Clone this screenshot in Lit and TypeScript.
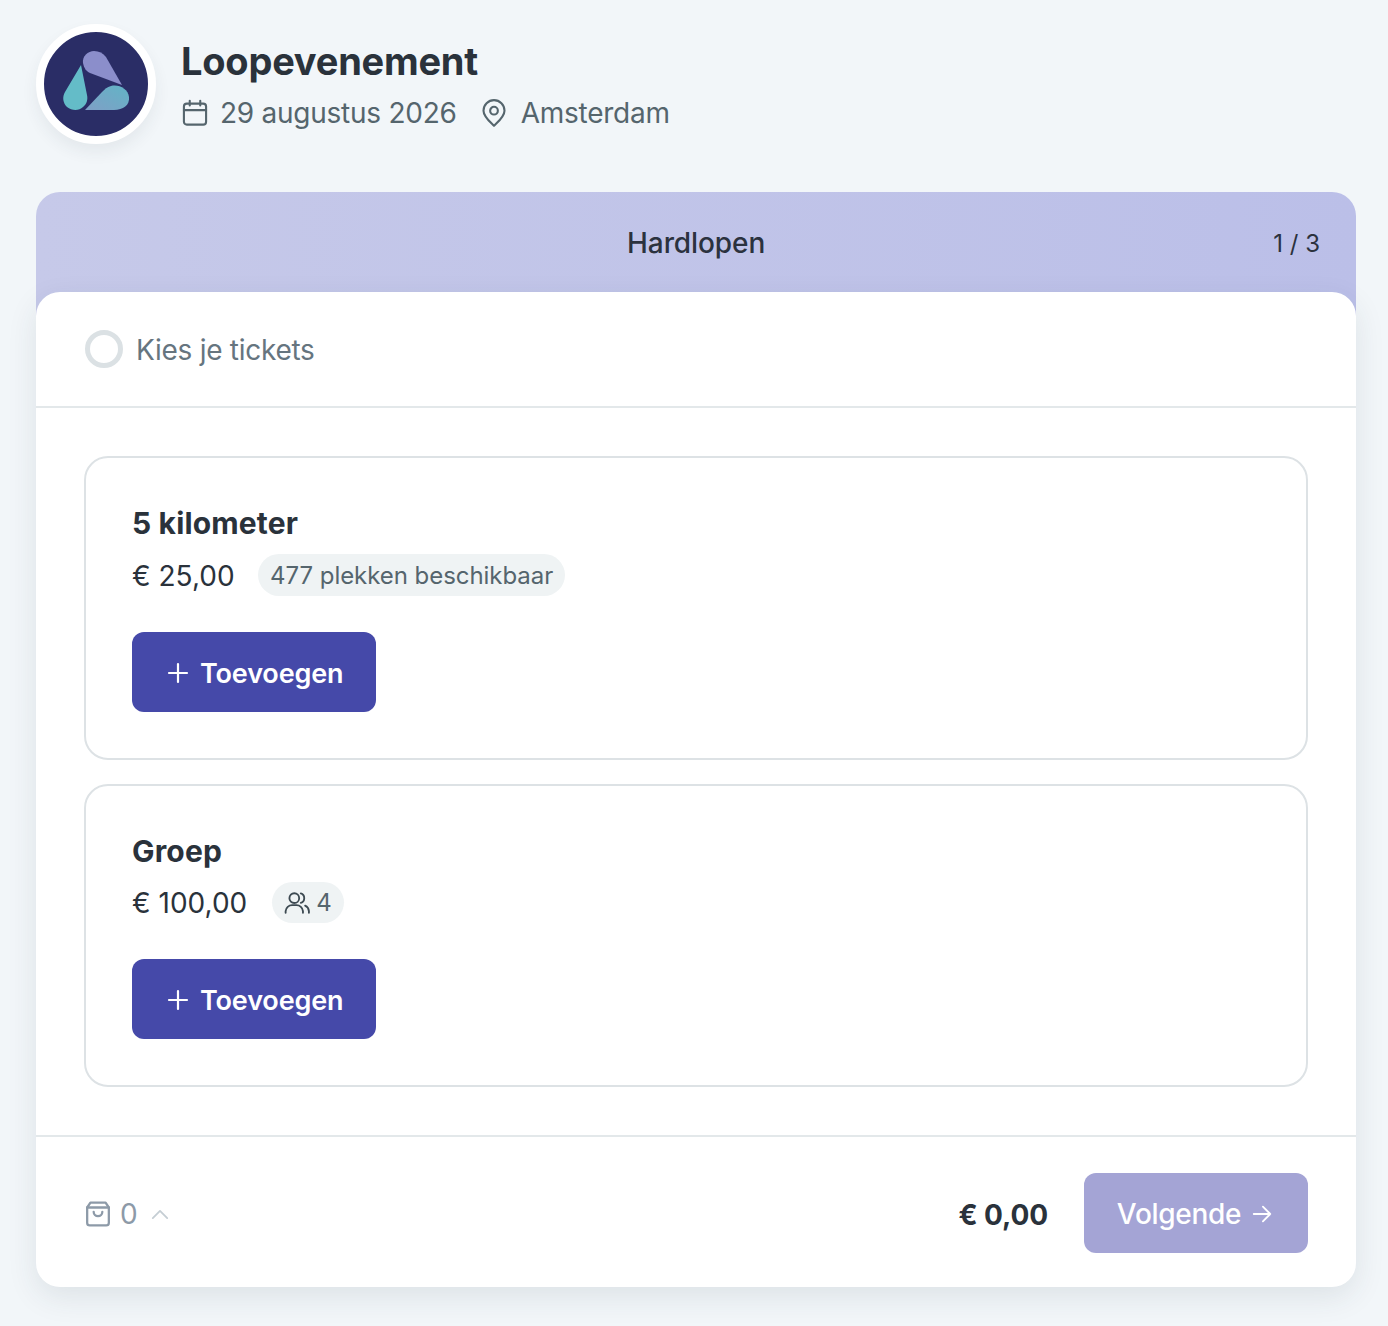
import { LitElement, html, css } from "lit";
import { customElement } from "lit/decorators.js";

@customElement("app-root")
export class AppRoot extends LitElement {
  static styles = css`
    :host {
      display: block;
      width: 1388px;
      height: 1326px;
      box-sizing: border-box;
      background: #f2f6f9;
      padding: 24px 32px 0 36px;
      font-family: Inter, "Liberation Sans", sans-serif;
      color: #2a323b;
      overflow: hidden;
    }
    * { box-sizing: border-box; }
    .head { display: flex; align-items: center; gap: 25px; height: 120px; margin-bottom: 48px; }
    .logo {
      width: 120px; height: 120px; border-radius: 50%;
      border: 8px solid #fff; background: #2a2d66; flex: none;
      box-shadow: 0 8px 16px rgba(40, 60, 70, 0.07);
      display: flex;
    }
    .logo svg { width: 104px; height: 104px; display: block; }
    .titles { display: flex; flex-direction: column; }
    h1 { margin: 0; font-size: 38px; line-height: 46px; font-weight: 700; letter-spacing: -0.23px; }
    .meta { display: flex; align-items: center; margin-top: 11px; font-size: 28px; line-height: 36px; color: #55656d; letter-spacing: -0.25px; }
    .meta svg { width: 28px; height: 28px; display: block; flex: none; }
    .meta .date { margin-left: 11px; margin-right: 23px; }
    .meta .place { margin-left: 13px; }
    .panel { position: relative; width: 1320px; }
    .banner {
      height: 128px; margin-bottom: -28px; padding: 0 36px 26px;
      border-radius: 24px 24px 0 0;
      background: linear-gradient(90deg, #c6c9e9, #bbbfe8);
      display: grid; grid-template-columns: 1fr auto; align-items: center;
      font-size: 28px;
    }
    .banner .name { text-align: center; font-weight: 500; font-size: 28px; padding-left: 47px; color: #2b323e; letter-spacing: -0.1px; }
    .banner .count { font-size: 24px; color: #2b323e; }
    .card {
      position: relative;
      background: #fff; border-radius: 24px; height: 995px;
      box-shadow: 0 10px 30px rgba(40, 60, 70, 0.1);
      display: flex; flex-direction: column;
    }
    .step {
      height: 116px; flex: none; border-bottom: 2px solid #e3e8ea;
      display: flex; align-items: center; gap: 13px; padding: 1px 48px 0 49px;
      font-size: 28px; color: #66757f; letter-spacing: -0.27px;
    }
    .ring { width: 38px; height: 38px; border-radius: 50%; border: 5px solid #dbe1e4; flex: none; margin-top: -2px; }
    .body { height: 729px; padding: 48px 48px 0; display: flex; flex-direction: column; gap: 24px; flex: none; border-bottom: 2px solid #e3e8ea; }
    .ticket { border: 2px solid #dde2e5; border-radius: 24px; padding: 45px 46px 0; height: 304px; flex: none; }
    .ticket.second { height: 303px; }
    .ticket h2 { margin: 0; font-size: 30px; line-height: 40px; font-weight: 700; letter-spacing: 0.16px; color: #2a323b; }
    .row { display: flex; align-items: center; gap: 23.5px; margin-top: 11px; height: 42px; }
    .second .row { height: 41px; gap: 25px; }
    .price { font-size: 28px; color: #2a323b; padding-top: 1px; }
    .pill {
      height: 42px; border-radius: 21px; background: #eff3f4; padding: 0 12px;
      display: flex; align-items: center; font-size: 24px; letter-spacing: -0.05px; color: #55656d; gap: 6px;
    }
    .second .pill { height: 41px; }
    .pill svg { width: 26px; height: 26px; display: block; }
    .add {
      margin-top: 36px; width: 244px; height: 80px; border: 0; border-radius: 12px;
      background: #4549a9; color: #fff; font: 600 27px Inter, sans-serif; letter-spacing: -0.15px;
      display: flex; align-items: center; gap: 10px; padding: 2px 0 0 34px;
    }
    .add svg { width: 24px; height: 24px; display: block; flex: none; }
    .foot { flex: 1; display: flex; align-items: center; padding: 2px 48px 0; }
    .bag { display: flex; align-items: center; color: #8d9aa8; font-size: 28px; padding: 2px 0 0 1px; }
    .bag svg { display: block; }
    .bag .n { margin-left: 9px; margin-right: 14px; letter-spacing: -0.5px; }
    .total { margin-left: auto; font-size: 28px; font-weight: 700; letter-spacing: -0.1px; color: #2a323b; margin-right: 36px; padding-top: 3px; }
    .next {
      width: 224px; height: 80px; border: 0; border-radius: 12px; background: #a4a4d5;
      color: #fff; font: 500 28px Inter, sans-serif; letter-spacing: -0.3px; display: flex; align-items: center;
      justify-content: center; gap: 10px; padding: 2px 2px 0 0;
    }
    .next svg { width: 22px; height: 22px; display: block; }
  `;

  private plus() {
    return html`<svg viewBox="0 0 24 24" fill="none" stroke="#fff" stroke-width="2.2" stroke-linecap="round"><path d="M12 3v18M3 12h18" /></svg>`;
  }

  private logo() {
    return html`<svg viewBox="0 0 104 104">
      <defs>
        <linearGradient id="g3" x1="0" y1="1" x2="1" y2="0">
          <stop offset="0" stop-color="#7f9fc6" /><stop offset="1" stop-color="#62b4c6" />
        </linearGradient>
      </defs>
      <path d="M39 31 C38 24 44 19 50 19 C55 19 59 21 62 25 L78 53 L46 41 C42 39 40 36 39 31Z" fill="#8b8ecb" />
      <path d="M37 33 L21 60 C18 65 19 71 23 75 C28 79 35 79 39 75 C43 72 44 67 43 63 Z" fill="#64bcc8" />
      <path d="M41 78 L70 78 C79 78 86 73 85 65 C84 57 75 52 67 54 C63 55 61 57 58 60 Z" fill="url(#g3)" />
    </svg>`;
  }

  private ticket(name: string, price: string, pill: unknown, cls = "") {
    return html`<div class="ticket ${cls}">
      <h2>${name}</h2>
      <div class="row"><span class="price">${price}</span>${pill}</div>
      <button class="add">${this.plus()}<span>Toevoegen</span></button>
    </div>`;
  }

  render() {
    return html`
      <div class="head">
        <div class="logo">${this.logo()}</div>
        <div class="titles">
          <h1>Loopevenement</h1>
          <div class="meta">
            <svg viewBox="0 0 24 24" fill="none" stroke="#55656d" stroke-width="1.8" stroke-linecap="round" stroke-linejoin="round">
              <rect x="2.5" y="4" width="19" height="18" rx="2.5" /><path d="M7.5 1.5v4M16.500 1.500v4M2.500 9.500h19" />
            </svg>
            <span class="date">29 augustus 2026</span>
            <svg viewBox="0 0 24 24" fill="none" stroke="#55656d" stroke-width="1.8" stroke-linecap="round" stroke-linejoin="round">
              <path d="M12 23 C8 19 3 15 3 10 a9 9 0 0 1 18 0 C21 15 16 19 12 23Z" /><circle cx="12" cy="10" r="3.300" />
            </svg>
            <span class="place">Amsterdam</span>
          </div>
        </div>
      </div>
      <div class="panel">
        <div class="banner"><div class="name">Hardlopen</div><div class="count">1 / 3</div></div>
        <div class="card">
          <div class="step"><span class="ring"></span><span>Kies je tickets</span></div>
          <div class="body">
            ${this.ticket("5 kilometer", "€ 25,00", html`<span class="pill">477 plekken beschikbaar</span>`)}
            ${this.ticket("Groep", "€ 100,00", html`<span class="pill">
              <svg viewBox="0 0 24 24" fill="none" stroke="#3d4a52" stroke-width="1.700" stroke-linecap="round" stroke-linejoin="round">
                <circle cx="9.500" cy="7.500" r="4.500" /><path d="M1.500 21 v-1.500 a6 6 0 0 1 6-5.500 h4 a6 6 0 0 1 6 5.500 V21" /><path d="M15.500 3.200 a4.500 4.500 0 0 1 0 8.600" /><path d="M19.500 14.500 a6 6 0 0 1 3.500 5 V21" />
              </svg>4</span>`, "second")}
          </div>
          <div class="foot">
            <div class="bag">
              <svg width="26" height="26" viewBox="0 0 24 24" fill="none" stroke="#8d9aa8" stroke-width="2.1" stroke-linecap="round" stroke-linejoin="round">
                <path d="M5 1.500 H19 L22 6 V20 a2.500 2.500 0 0 1-2.500 2.500 H4.500 A2.500 2.500 0 0 1 2 20 V6 Z" /><path d="M2 6 H22" /><path d="M8 10 a4 4 0 0 0 8 0" />
              </svg>
              <span class="n">0</span>
              <svg width="18" height="11" viewBox="0 0 20 12" fill="none" stroke="#c5ced4" stroke-width="2" stroke-linecap="round" stroke-linejoin="round"><path d="M2 10 L10 2 L18 10" /></svg>
            </div>
            <div class="total">€ 0,00</div>
            <button class="next"><span>Volgende</span>
              <svg viewBox="0 0 24 24" fill="none" stroke="#fff" stroke-width="2" stroke-linecap="round" stroke-linejoin="round"><path d="M3 12 H21 M13 4 L21 12 L13 20" /></svg>
            </button>
          </div>
        </div>
      </div>
    `;
  }
}
